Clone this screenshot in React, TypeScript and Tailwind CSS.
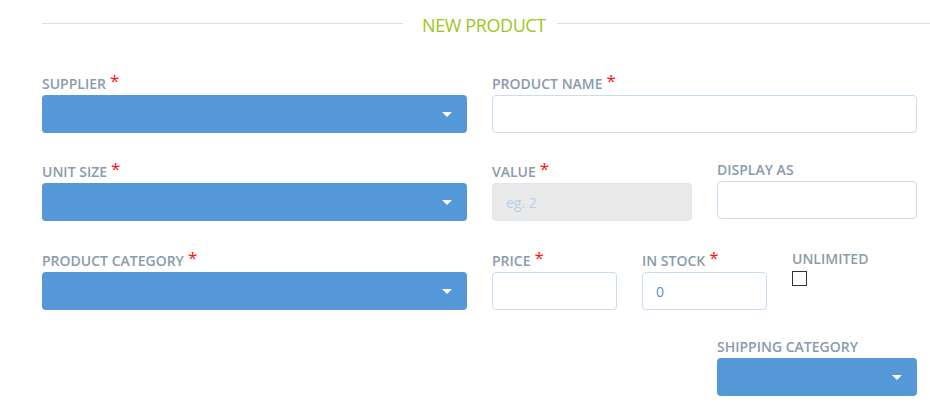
import React from "react";

const Label = ({ text, required }: { text: string; required?: boolean }) => (
  <div className="mb-[2px] text-[14px] leading-[18px] font-semibold uppercase text-[#8a9bab] whitespace-nowrap">
    {text}
    {required && (
      <span className="relative -top-[2px] ml-[4px] text-[17px] leading-[20px] font-normal text-[#ff1010]">*</span>
    )}
  </div>
);

const Select = () => (
  <div className="flex h-[38px] items-center justify-end rounded-[4px] bg-[#5498d8] pr-[15px]">
    <svg width="10" height="5" viewBox="0 0 10 5">
      <polygon points="0,0 10,0 5,5" fill="#ffffff" />
    </svg>
  </div>
);

const Input = ({
  value,
  placeholder,
  disabled,
}: {
  value?: string;
  placeholder?: string;
  disabled?: boolean;
}) => (
  <div
    className={`flex h-[38px] items-center rounded-[4px] border px-[13px] text-[14px] ${
      disabled ? "bg-[#e9e9e9] border-[#dbe6f2]" : "bg-white border-[#c9dcf0]"
    }`}
  >
    {value ? (
      <span className="text-[#5a8fd6]">{value}</span>
    ) : (
      <span className="text-[#b9cfe8]">{placeholder}</span>
    )}
  </div>
);

const Field = ({
  label,
  required,
  children,
}: {
  label: string;
  required?: boolean;
  children: React.ReactNode;
}) => (
  <div className="flex flex-col">
    <Label text={label} required={required} />
    {children}
  </div>
);

export default function App() {
  return (
    <div className="h-[420px] w-[930px] overflow-hidden bg-white font-['Open_Sans',sans-serif]">
      <div className="flex h-[46px] items-center pl-[42px]">
        <div className="h-px w-[361px] bg-[#d7dfe7]" />
        <div className="ml-[19px] mr-[11px] pt-[3px] text-[18px] leading-[24px] font-medium tracking-[-0.4px] text-[#9dc61c]">
          NEW PRODUCT
        </div>
        <div className="h-px flex-1 bg-[#d7dfe7]" />
      </div>

      <div className="flex flex-col gap-y-[28px] pl-[42px] pr-[13px] pt-[27px]">
        <div className="grid grid-cols-2 gap-x-[25px]">
          <Field label="Supplier" required>
            <Select />
          </Field>
          <Field label="Product Name" required>
            <Input />
          </Field>
        </div>

        <div className="grid grid-cols-2 gap-x-[25px]">
          <Field label="Unit Size" required>
            <Select />
          </Field>
          <div className="grid grid-cols-2 gap-x-[25px] items-start">
            <Field label="Value" required>
              <Input placeholder="eg. 2" disabled />
            </Field>
            <Field label="Display As">
              <Input />
            </Field>
          </div>
        </div>

        <div className="grid grid-cols-2 gap-x-[25px] pt-px">
          <Field label="Product Category" required>
            <Select />
          </Field>
          <div className="grid grid-cols-3 gap-x-[25px] items-start">
            <Field label="Price" required>
              <Input />
            </Field>
            <Field label="In Stock" required>
              <Input value="0" />
            </Field>
            <div className="flex flex-col">
              <Label text="Unlimited" />
              <div className="mt-px h-[15px] w-[15px] border border-[#333333] bg-white" />
            </div>
          </div>
        </div>

        <div className="grid grid-cols-2 gap-x-[25px]">
          <div />
          <div className="grid grid-cols-2 gap-x-[25px]">
            <div />
            <Field label="Shipping Category">
              <Select />
            </Field>
          </div>
        </div>
      </div>
    </div>
  );
}
